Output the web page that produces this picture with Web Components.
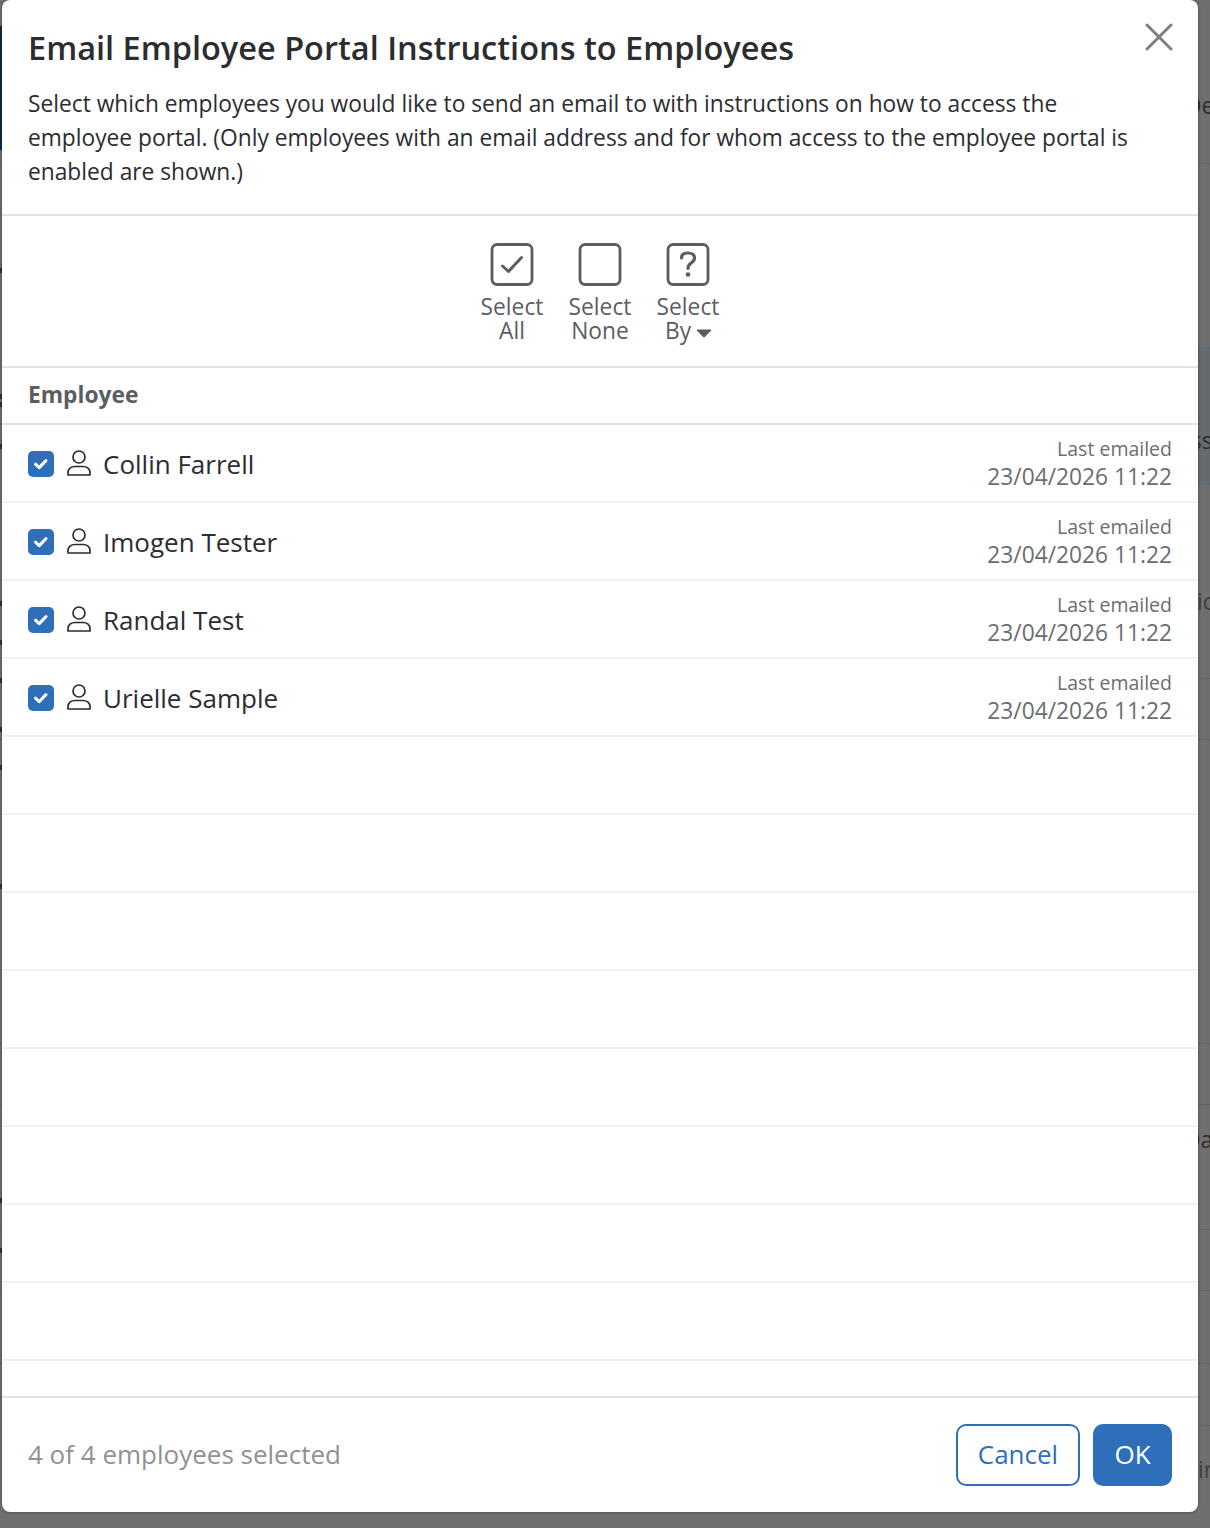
<!DOCTYPE html>
<html>
<head>
<meta charset="utf-8">
<title>Email Employee Portal Instructions</title>
<style>
    html, body { margin: 0; height: 100%; }
    body { font-family: "Open Sans", "Liberation Sans", sans-serif; overflow: hidden; }
</style>
</head>
<body>
<backdrop-page>
    <portal-dialog heading="Email Employee Portal Instructions to Employees">
        Select which employees you would like to send an email to with instructions on how to access the employee portal. (Only employees with an email address and for whom access to the employee portal is enabled are shown.)
    </portal-dialog>
</backdrop-page>

<script>
/* greyed page that shows around the dialog */
class BackdropPage extends HTMLElement {
    constructor() {
        super();
        const shadow = this.attachShadow({ mode: 'open' });
        const marks = [268, 394, 402, 444, 601, 640, 678, 727, 765, 884, 1198, 1248]
            .map(y => `<div class="mark" style="top:${y}px"></div>`).join('');
        shadow.innerHTML = `
            <style>
                :host {
                    display: block;
                    position: relative;
                    width: 1210px;
                    height: 1528px;
                    overflow: hidden;
                    background: #6f6f6f;
                }
                .strip {
                    position: absolute;
                    font-size: 22.75px;
                    line-height: 34px;
                    color: #2b2d30;
                    white-space: nowrap;
                }
                .rule {
                    position: absolute;
                    left: 0;
                    right: 0;
                    height: 1px;
                    background: #636363;
                }
                .band {
                    position: absolute;
                    left: 1198px;
                    right: 0;
                    background: #656a6e;
                }
                .navy {
                    position: absolute;
                    left: 0;
                    width: 2px;
                    top: 26px;
                    height: 124px;
                    background: #0d2a4a;
                }
                .mark {
                    position: absolute;
                    left: 0;
                    width: 2px;
                    height: 5px;
                    background: #2f3133;
                }
            </style>
            <div class="navy"></div>
            <div class="band" style="top:347px;height:138px"></div>
            <div class="rule" style="top:163px"></div>
            <div class="rule" style="top:678px"></div>
            <div class="rule" style="top:739px"></div>
            <div class="rule" style="top:1043px"></div>
            <div class="rule" style="top:1104px"></div>
            <div class="rule" style="top:1229px"></div>
            <div class="rule" style="top:1290px"></div>
            <div class="rule" style="top:1363px"></div>
            <div class="rule" style="top:1425px"></div>
            ${marks}
            <div class="strip" style="left:1185px;top:89px">De</div>
            <div class="strip" style="left:1191px;top:424px">ss</div>
            <div class="strip" style="left:1197px;top:585px;color:#3f4143">ic</div>
            <div class="strip" style="left:1184px;top:1123px">Da</div>
            <div class="strip" style="left:1198px;top:1453px;color:#3f4143">ir</div>
            <slot></slot>
        `;
    }
}

/* one row of the employee list, empty when it has no name */
class EmployeeRow extends HTMLElement {
    constructor() {
        super();
        this.attachShadow({ mode: 'open' });
    }
    connectedCallback() {
        const name = this.getAttribute('name');
        const body = name ? `
            <div class="box">
                <svg width="16" height="12" viewBox="0 0 16 12" fill="none" stroke="#fff" stroke-width="3" stroke-linecap="round" stroke-linejoin="round"><path d="M2.5 6.2 L6.2 9.6 L13 2.6"/></svg>
            </div>
            <svg class="person" width="24" height="26" viewBox="0 0 24 26" fill="none" stroke="#2b2d30" stroke-width="1.7"><circle cx="12" cy="7" r="6"/><path d="M1 25 V22.500 C1 19 4 16.500 8 16.500 H16 C20 16.500 23 19 23 22.500 V25 Z" stroke-linejoin="round"/></svg>
            <span class="name">${name}</span>
            <div class="stamp">
                <span class="lbl">Last emailed</span>
                <span class="when">${this.getAttribute('when')}</span>
            </div>` : '';
        this.shadowRoot.innerHTML = `
            <style>
                :host {
                    display: flex;
                    align-items: center;
                    box-sizing: border-box;
                    height: 78px;
                    padding: 2px 26px 0;
                    border-bottom: 2px solid #f0f1f2;
                }
                .box {
                    display: flex;
                    align-items: center;
                    justify-content: center;
                    width: 26px;
                    height: 26px;
                    border-radius: 5px;
                    background: #2f6fba;
                }
                .person { margin: -2px 0 0 13px; }
                .name {
                    margin-left: 12px;
                    font-size: 26px;
                    color: #2b2d30;
                }
                .stamp {
                    margin: -2px 0 0 auto;
                    display: flex;
                    flex-direction: column;
                    align-items: flex-end;
                    color: #6b6e71;
                }
                .lbl { font-size: 19.5px; line-height: 28px; }
                .when { font-size: 22.75px; line-height: 28px; }
            </style>
            ${body}
        `;
    }
}

/* icon + two line label in the select toolbar */
class SelectTool extends HTMLElement {
    constructor() {
        super();
        const shadow = this.attachShadow({ mode: 'open' });
        shadow.innerHTML = `
            <style>
                :host {
                    display: flex;
                    flex-direction: column;
                    align-items: center;
                    width: 88px;
                    color: #5b5e61;
                    font-size: 22.75px;
                    line-height: 24px;
                    text-align: center;
                }
                .ico { width: 44px; height: 44px; margin-bottom: 9px; }
                ::slotted(svg[slot="icon"]) { display: block; }
            </style>
            <div class="ico"><slot name="icon"></slot></div>
            <div><slot></slot></div>
        `;
    }
}

class PortalDialog extends HTMLElement {
    constructor() {
        super();
        const shadow = this.attachShadow({ mode: 'open' });
        const people = [
            ['Collin Farrell', '23/04/2026 11:22'],
            ['Imogen Tester', '23/04/2026 11:22'],
            ['Randal Test', '23/04/2026 11:22'],
            ['Urielle Sample', '23/04/2026 11:22'],
        ];
        let rows = people.map(p => `<employee-row name="${p[0]}" when="${p[1]}"></employee-row>`).join('');
        rows += '<employee-row></employee-row>'.repeat(8);
        const frame = '<rect x="2" y="2.500" width="40" height="40" rx="5" fill="none" stroke="#5b5e61" stroke-width="2.800"/>';
        shadow.innerHTML = `
            <style>
                :host {
                    position: absolute;
                    left: 2px;
                    top: 0;
                    width: 1196px;
                    height: 1512px;
                    display: flex;
                    flex-direction: column;
                    box-sizing: border-box;
                    background: #fff;
                    border-radius: 8px;
                    box-shadow: 0 0 3px rgba(0,0,0,.45);
                }
                header {
                    position: relative;
                    box-sizing: border-box;
                    height: 216px;
                    padding: 27px 26px 0;
                    border-bottom: 2px solid #dfe3e6;
                }
                h1 {
                    margin: 0 0 18px;
                    font-size: 32.5px;
                    line-height: 42px;
                    font-weight: 600;
                    color: #2b2d30;
                }
                p {
                    margin: 0;
                    max-width: 1110px;
                    font-size: 22.75px;
                    line-height: 34px;
                    color: #2b2d30;
                }
                .close {
                    position: absolute;
                    right: 25px;
                    top: 23px;
                    display: block;
                }
                .tools {
                    box-sizing: border-box;
                    height: 152px;
                    display: flex;
                    justify-content: center;
                    padding-top: 26px;
                    border-bottom: 2px solid #dfe3e6;
                }
                .head {
                    box-sizing: border-box;
                    height: 57px;
                    display: flex;
                    align-items: center;
                    padding: 0 26px 3px;
                    font-size: 22.75px;
                    font-weight: 700;
                    color: #5b5e61;
                    border-bottom: 2px solid #dfe3e6;
                }
                .list { flex: 1; overflow: hidden; }
                footer {
                    box-sizing: border-box;
                    height: 116px;
                    display: flex;
                    align-items: center;
                    gap: 13px;
                    padding: 0 26px;
                    border-top: 2px solid #dfe3e6;
                }
                .count {
                    margin: 0 auto 2px 0;
                    font-size: 26px;
                    color: #8f9295;
                }
                button {
                    font: inherit;
                    font-size: 26px;
                    height: 62px;
                    border-radius: 10px;
                    border: 2px solid #2f6fba;
                    padding: 0 0 2px;
                }
                .cancel { width: 124px; background: #fff; color: #2f6fba; }
                .ok { width: 79px; background: #2f6fba; color: #fff; }
                .by { white-space: nowrap; margin-left: 1px; }
                .caret { display: inline-block; margin-left: 5px; vertical-align: 1px; }
            </style>
            <header>
                <h1>${this.getAttribute('heading')}</h1>
                <p><slot></slot></p>
                <svg class="close" width="28" height="28" viewBox="0 0 28 28" stroke="#7d7f81" stroke-width="3" stroke-linecap="round"><path d="M2 2 L26 26 M26 2 L2 26"/></svg>
            </header>
            <div class="tools">
                <select-tool>
                    <svg slot="icon" width="44" height="44" viewBox="0 0 44 44">${frame}<path d="M12.500 24 L18.500 29.500 L31.500 15.500" fill="none" stroke="#5b5e61" stroke-width="3" stroke-linecap="round" stroke-linejoin="round"/></svg>
                    Select<br>All
                </select-tool>
                <select-tool>
                    <svg slot="icon" width="44" height="44" viewBox="0 0 44 44">${frame}</svg>
                    Select<br>None
                </select-tool>
                <select-tool>
                    <svg slot="icon" width="44" height="44" viewBox="0 0 44 44">${frame}<path d="M15.500 16 C15.500 12.500 18 11 22 11 C26 11 28.500 13 28.500 16 C28.500 19 26.500 20 24.500 21.500 C22.800 22.800 22 23.500 22 26.500" fill="none" stroke="#5b5e61" stroke-width="3.200" stroke-linecap="round"/><circle cx="22" cy="32.500" r="2.300" fill="#5b5e61"/></svg>
                    Select<br><span class="by">By<svg class="caret" width="16" height="9" viewBox="0 0 16 9"><path d="M1.500 .5 H14.500 Q15.700 .5 15 1.700 L8.800 8 Q8 8.700 7.200 8 L1 1.700 Q.3 .5 1.500 .5 Z" fill="#5b5e61"/></svg></span>
                </select-tool>
            </div>
            <div class="head">Employee</div>
            <div class="list">${rows}</div>
            <footer>
                <span class="count">4 of 4 employees selected</span>
                <button class="cancel">Cancel</button>
                <button class="ok">OK</button>
            </footer>
        `;
    }
}

customElements.define('backdrop-page', BackdropPage);
customElements.define('employee-row', EmployeeRow);
customElements.define('select-tool', SelectTool);
customElements.define('portal-dialog', PortalDialog);
</script>
</body>
</html>
